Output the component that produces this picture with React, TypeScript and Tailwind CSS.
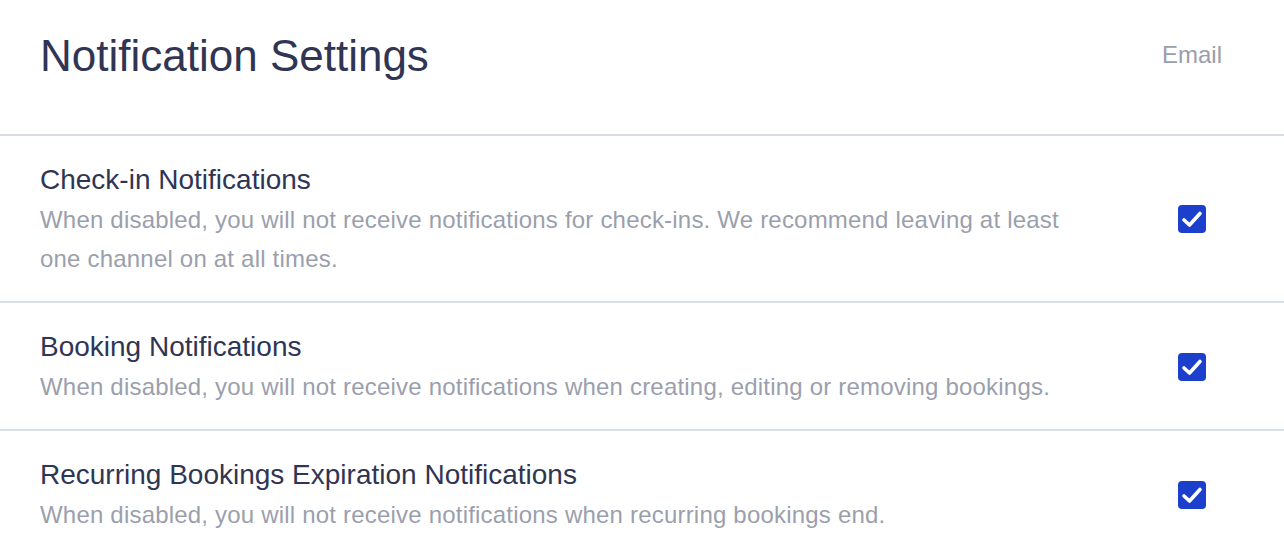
import React from "react";

const rows = [
  {
    title: "Check-in Notifications",
    desc: "When disabled, you will not receive notifications for check-ins. We recommend leaving at least one channel on at all times.",
  },
  {
    title: "Booking Notifications",
    desc: "When disabled, you will not receive notifications when creating, editing or removing bookings.",
  },
  {
    title: "Recurring Bookings Expiration Notifications",
    desc: "When disabled, you will not receive notifications when recurring bookings end.",
  },
];

function Check() {
  return (
    <div className="w-[28px] h-[28px] rounded-[4px] bg-[#1c3fcc] flex items-center justify-center">
      <svg width="28" height="28" viewBox="0 0 28 28" fill="none">
        <path
          d="M6 15L11.5 20L22 8.5"
          stroke="white"
          strokeWidth="3.6"
          strokeLinecap="round"
          strokeLinejoin="round"
        />
      </svg>
    </div>
  );
}

export default function App() {
  return (
    <div
      className="w-[1284px] min-h-[550px] bg-white"
      style={{ fontFamily: '"Liberation Sans", Arial, Helvetica, sans-serif' }}
    >
      <div className="flex items-start pl-[40px] pt-[30px] pb-[52px] border-b-2 border-[#d9dce9]">
        <h1 className="flex-1 text-[44px] leading-[52px] text-[#2f3553] font-normal">
          Notification Settings
        </h1>
        <div className="w-[120px] mr-[32px] mt-[9px] text-center text-[24px] leading-[32px] text-[#9a9eab]">
          Email
        </div>
      </div>
      {rows.map((r, i) => (
        <div
          key={i}
          className={`flex items-center pl-[40px] pt-[28px] pb-[23px] ${
            i < rows.length - 1 ? "border-b-2 border-[#d9dce9]" : ""
          }`}
        >
          <div className="flex-1 max-w-[1040px]">
            <div className="text-[28px] leading-[32px] text-[#2f3553]">{r.title}</div>
            <div className="mt-[4px] text-[24px] leading-[39px] tracking-[0.2px] text-[#9b9fad]">
              {r.desc}
            </div>
          </div>
          <div className="ml-auto w-[120px] mr-[32px] mb-[4px] flex justify-center">
            <Check />
          </div>
        </div>
      ))}
    </div>
  );
}
